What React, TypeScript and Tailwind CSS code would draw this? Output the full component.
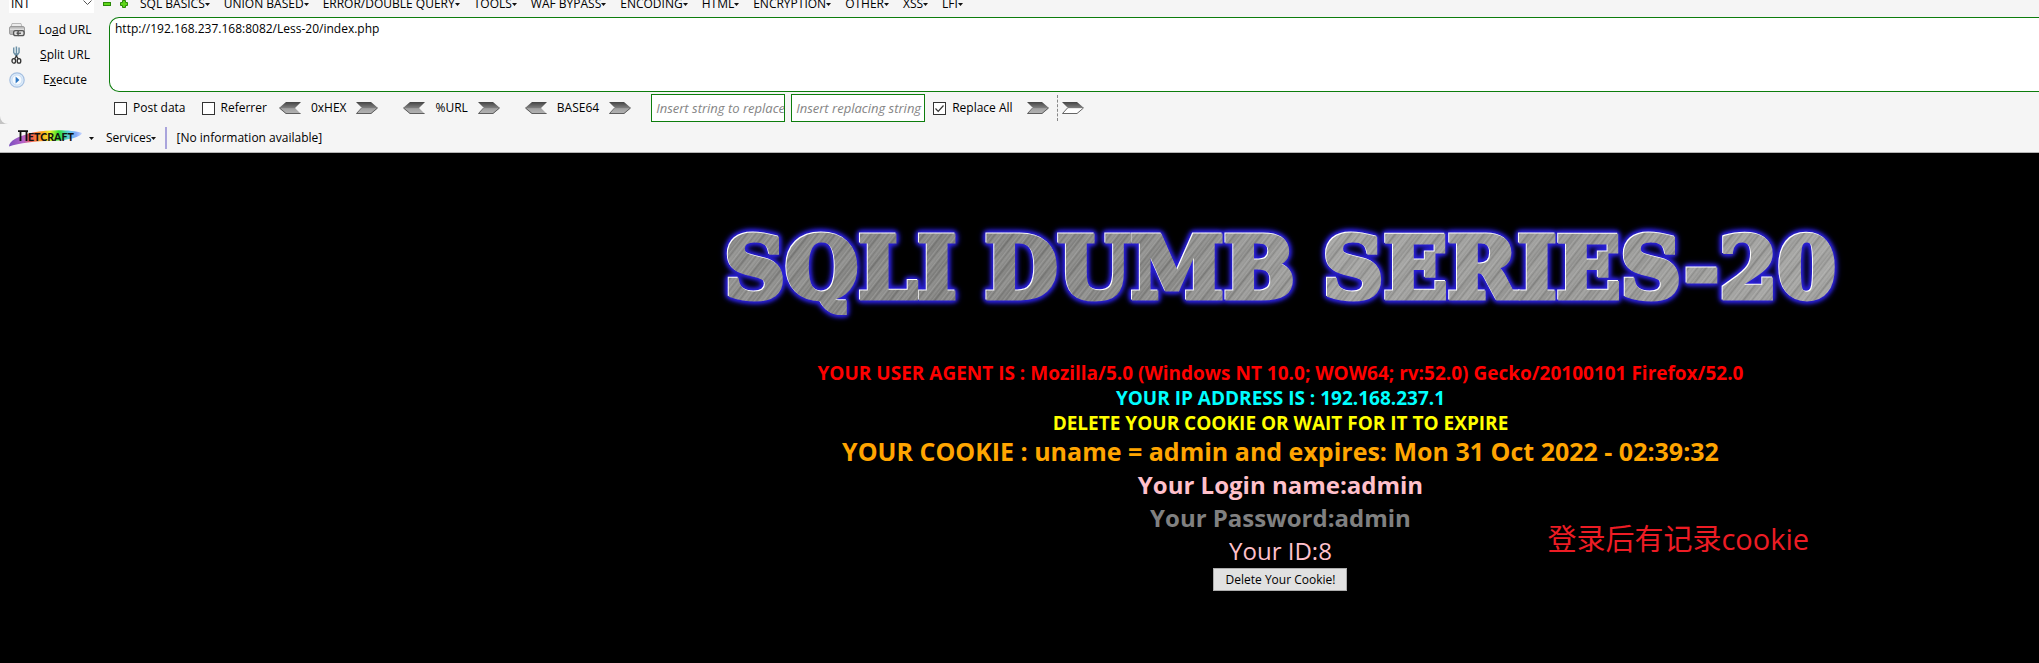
import { useId } from "react";
import type { ReactNode } from "react";

const menus = ["SQL BASICS", "UNION BASED", "ERROR/DOUBLE QUERY", "TOOLS", "WAF BYPASS", "ENCODING", "HTML", "ENCRYPTION", "OTHER", "XSS", "LFI"];

function Caret() {
  return (
    <svg className="h-[3px] w-[5px] shrink-0" viewBox="0 0 5 3" aria-hidden="true">
      <path d="M0 0H5L2.5 3Z" fill="#111" />
    </svg>
  );
}

function Chevron({ left = false, hollow = false, label }: { left?: boolean; hollow?: boolean; label: string }) {
  const id = useId();
  const d = left ? "M22 0H7L0 6L7 12H22L16 6Z" : "M0 0H15L22 6L15 12H0L6 6Z";
  return (
    <button type="button" aria-label={label} className="shrink-0">
      <svg className="block h-3 w-[22px]" viewBox="0 0 22 12">
        <defs>
          <linearGradient id={id} x1="0" y1="0" x2="0" y2="1">
            <stop offset="0" stopColor="#444" />
            <stop offset="0.5" stopColor="#808080" />
            <stop offset="0.55" stopColor={hollow ? "#fff" : "#a2a2a2"} />
            <stop offset="1" stopColor={hollow ? "#fff" : "#b4b4b4"} />
          </linearGradient>
        </defs>
        <path d={d} fill={`url(#${id})`} />
        <path d={left ? "M0.5 6L7 11.5H21.5" : "M5.5 6L0.5 11.5H15L21.5 6"} fill="none" stroke="#555" strokeWidth="0.9" />
      </svg>
    </button>
  );
}

function Check({ label, checked = false }: { label: string; checked?: boolean }) {
  return (
    <label className="flex shrink-0 items-center gap-1.5">
      <span className="relative block h-[13px] w-[13px]">
        <input type="checkbox" defaultChecked={checked} className="peer block h-[13px] w-[13px] appearance-none border border-[#333] bg-white" />
        <svg viewBox="0 0 13 13" className="pointer-events-none absolute inset-0 hidden peer-checked:block" aria-hidden="true">
          <path d="M2.5 6.5L5.2 9.3L10.5 3.5" fill="none" stroke="#333" strokeWidth="1.2" />
        </svg>
      </span>
      {label}
    </label>
  );
}

function Codec({ name }: { name: string }) {
  return (
    <div className="flex shrink-0 items-center gap-2.5">
      <Chevron left label={`Decode ${name}`} />
      <span>{name}</span>
      <Chevron label={`Encode ${name}`} />
    </div>
  );
}

function Action({ icon, children }: { icon: ReactNode; children: ReactNode }) {
  return (
    <button type="button" className="flex h-[25px] w-full items-center">
      <span className="w-4 shrink-0">{icon}</span>
      <span className="flex-1 pl-2 text-center">{children}</span>
    </button>
  );
}

function LoadIcon() {
  return (
    <svg viewBox="0 0 16 16" className="h-4 w-4">
      <path d="M3 1.5H12L13 5H2Z" fill="#ececec" stroke="#aaa" strokeWidth="0.8" />
      <rect x="0.5" y="4.5" width="15" height="8" rx="1.5" fill="#b9b9b9" stroke="#8f8f8f" strokeWidth="0.8" />
      <path d="M1 7.2H15" stroke="#eee" />
      <rect x="4.6" y="8.7" width="6" height="5" rx="2" fill="#ddd" stroke="#555" strokeWidth="1.3" />
      <rect x="8.9" y="8.7" width="6.2" height="5" rx="2" fill="#ddd" stroke="#555" strokeWidth="1.3" />
      <path d="M7.5 11.2H12" stroke="#444" strokeWidth="1.2" />
    </svg>
  );
}

function SplitIcon() {
  return (
    <svg viewBox="0 0 16 18" className="h-[18px] w-4">
      <path d="M4.8 1.5V6.5L7 9.5M7.4 0.5V10M10 1.5V6.5L7.8 9.5" fill="none" stroke="#6a8fa5" strokeWidth="1.5" />
      <path d="M6.1 2V7M8.7 2V7" stroke="#d3e4ec" strokeWidth="0.8" />
      <path d="M5.6 12.8L7.4 10L9.2 12.8" fill="none" stroke="#333" strokeWidth="1.3" />
      <ellipse cx="4.8" cy="14.9" rx="1.8" ry="2.2" fill="none" stroke="#333" strokeWidth="1.3" />
      <ellipse cx="10" cy="14.9" rx="1.8" ry="2.2" fill="none" stroke="#333" strokeWidth="1.3" />
    </svg>
  );
}

function ExecuteIcon() {
  return (
    <svg viewBox="0 0 16 16" className="h-4 w-4">
      <circle cx="8" cy="8" r="7.2" fill="#dcebfa" stroke="#a5bfe0" strokeWidth="1.2" />
      <circle cx="8" cy="8" r="5" fill="#f7fbff" stroke="#c2d7ef" strokeWidth="0.8" />
      <path d="M6.6 4.4L10.4 8L6.6 11.6Z" fill="#2d78c4" />
    </svg>
  );
}

function Netcraft() {
  return (
    <svg viewBox="0 0 74 18" className="h-[18px] w-[74px] shrink-0" role="img" aria-label="Netcraft">
      <defs>
        <linearGradient id="rainbow" x1="0" y1="0" x2="1" y2="0">
          <stop offset="0" stopColor="#7a4fc0" />
          <stop offset="0.2" stopColor="#b864c8" />
          <stop offset="0.32" stopColor="#f0604a" />
          <stop offset="0.45" stopColor="#ffa51e" />
          <stop offset="0.56" stopColor="#e6f02a" />
          <stop offset="0.68" stopColor="#2fe02f" />
          <stop offset="0.82" stopColor="#5cc8e8" />
          <stop offset="0.92" stopColor="#86a8f8" />
          <stop offset="1" stopColor="#c9d8ff" />
        </linearGradient>
      </defs>
      <path d="M0 17.5C0 12 9 7 24 3.5C40 0.5 62 0.5 73 4C72 8 60 11 44 12C26 12 10 14 0 17.5Z" fill="url(#rainbow)" />
      <path d="M9 2.2H19M11.5 2V12M17.5 2V12" fill="none" stroke="#111" strokeWidth="1.8" />
      <text x="19" y="11.5" fill="#111" fontFamily="Lato, sans-serif" fontWeight="900" fontSize="10.6">ETCRAFT</text>
    </svg>
  );
}

function MenuBar() {
  return (
    <nav className="flex h-[17px] items-start pl-[9px] leading-4 whitespace-nowrap">
      <div className="relative h-[13px] w-[85px] shrink-0 bg-white">
        <select aria-label="Mode" className="-mt-1 block h-4 w-full appearance-none bg-transparent pl-0.5 leading-4 outline-none">
          <option>INT</option>
        </select>
        <svg viewBox="0 0 9 6" className="pointer-events-none absolute top-0 right-[2px] h-1.5 w-[9px]" aria-hidden="true">
          <path d="M0.5 0.5L4.5 4.5L8.5 0.5" fill="none" stroke="#555" />
        </svg>
      </div>
      <div className="ml-[9px] flex h-2 shrink-0 items-center gap-[9px]">
        <button type="button" aria-label="Remove">
          <svg viewBox="0 0 8 8" className="block h-2 w-2"><rect x="0.5" y="2.5" width="7" height="3" fill="#5fd61a" stroke="#2a8a08" /></svg>
        </button>
        <button type="button" aria-label="Add">
          <svg viewBox="0 0 8 8" className="block h-2 w-2"><path d="M2.5 0.5H5.5V2.5H7.5V5.5H5.5V7.5H2.5V5.5H0.5V2.5H2.5Z" fill="#5fd61a" stroke="#2a8a08" /></svg>
        </button>
      </div>
      <div className="-mt-1 ml-3 flex gap-3.5">
        {menus.map((m) => (
          <button key={m} type="button" className="flex shrink-0 items-center">{m}<Caret /></button>
        ))}
      </div>
    </nav>
  );
}

function HackBar() {
  return (
    <div className="flex pl-[9px]">
      <div className="w-[100px] shrink-0 pr-3">
        <Action icon={<LoadIcon />}>Lo<u>a</u>d URL</Action>
        <Action icon={<SplitIcon />}><u>S</u>plit URL</Action>
        <Action icon={<ExecuteIcon />}>E<u>x</u>ecute</Action>
      </div>
      <div className="min-w-0 flex-1">
        <textarea
          aria-label="URL"
          defaultValue="http://192.168.237.168:8082/Less-20/index.php"
          className="block h-[75px] w-full resize-none rounded-l-[10px] border border-r-0 border-[#0d7d0d] bg-white px-[5px] py-[3px] leading-4 outline-none"
        />
        <div className="flex h-8 items-center pl-[5px] whitespace-nowrap">
          <div className="flex gap-4"><Check label="Post data" /><Check label="Referrer" /></div>
          <div className="ml-3 flex gap-[25px]"><Codec name="0xHEX" /><Codec name="%URL" /><Codec name="BASE64" /></div>
          <div className="ml-5 flex gap-1.5">
            <input aria-label="String to replace" placeholder="Insert string to replace" className="h-7 w-[134px] border border-[#0d7d0d] bg-white pl-1 text-[13px] outline-none placeholder:text-[#858585] placeholder:italic" />
            <input aria-label="Replacing string" placeholder="Insert replacing string" className="h-7 w-[134px] border border-[#0d7d0d] bg-white pl-1 text-[13px] outline-none placeholder:text-[#858585] placeholder:italic" />
          </div>
          <div className="ml-2 flex items-center gap-3.5"><Check label="Replace All" checked /><Chevron label="Replace" /></div>
          <div className="ml-2 flex h-[26px] items-center border-l border-dashed border-[#888] pl-1"><Chevron hollow label="Replace next" /></div>
        </div>
      </div>
    </div>
  );
}

export default function App() {
  return (
    <div className="flex min-h-screen flex-col overflow-hidden bg-black font-['Open_Sans','Noto_Sans_CJK_SC',sans-serif] text-xs text-black">
      <header className="border-b border-[#b4b4b4] bg-[#f5f5f5]">
        <div className="bg-[#c4c4c4]">
          <div className="rounded-bl-lg bg-[#f5f5f5]">
            <MenuBar />
            <HackBar />
          </div>
        </div>
        <div className="flex h-7 items-center pl-[9px] whitespace-nowrap">
          <Netcraft />
          <button type="button" aria-label="Netcraft menu" className="ml-[6px]"><Caret /></button>
          <button type="button" className="ml-3 flex items-center">Services<Caret /></button>
          <span className="mx-[9px] h-[22px] w-0.5 bg-[#a9a4dc]" />
          <span>[No information available]</span>
        </div>
      </header>

      <main className="flex flex-1 flex-col items-center pl-[25.6%] text-center font-bold whitespace-nowrap">
        <h1 className="mt-[70px] flex gap-7 bg-[repeating-linear-gradient(128deg,#fff0_0px,#ffffff24_1px,#0000_2px,#0000001c_3px,#0000_4px,#ffffff18_5px,#fff0_7px),repeating-linear-gradient(131deg,#0000_0px,#00000012_4px,#0000_7px,#ffffff10_13px,#0000_17px),linear-gradient(100deg,#8e8e8c,#858583_20%,#8c8c8a_40%,#a2a2a0_55%,#989896_75%,#a4a4a2)] bg-clip-text font-['DejaVu_Serif',serif] text-[84px] leading-[92px] text-transparent [-webkit-text-stroke:5px_transparent] [filter:drop-shadow(-1px_-1px_0_#fff)_drop-shadow(0_0_2px_#2a20d8)_drop-shadow(0_0_2px_#2a20d8)_drop-shadow(0_0_2px_#2a20d8)]">
          <span>SQLI</span><span>DUMB</span><span>SERIES-20</span>
        </h1>
        <div className="mt-[46px] text-[19px] leading-[25px]">
          <p className="text-[#f00]">YOUR USER AGENT IS : Mozilla/5.0 (Windows NT 10.0; WOW64; rv:52.0) Gecko/20100101 Firefox/52.0</p>
          <p className="text-[#0ff]">YOUR IP ADDRESS IS : 192.168.237.1</p>
          <p className="text-[#ff0]">DELETE YOUR COOKIE OR WAIT FOR IT TO EXPIRE</p>
        </div>
        <div className="-mt-px mb-px text-2xl leading-[33px]">
          <p className="text-[25px] text-[#ffa500]">YOUR COOKIE : uname = admin and expires: Mon 31 Oct 2022 - 02:39:32</p>
          <p className="text-[#ffc0cb]">Your Login name:admin</p>
          <p className="text-[#808080]">Your Password:admin</p>
          <div className="relative font-normal text-[#ffc0cb]">
            <p>Your ID:8</p>
            <p className="absolute -top-3 left-[calc(50%+267px)] text-[29px] text-[#ed1c24]">登录后有记录cookie</p>
          </div>
        </div>
        <button type="button" className="h-[23px] w-[134px] border border-[#adadad] bg-[#e1e1e1] font-normal text-black">Delete Your Cookie!</button>
      </main>
    </div>
  );
}
